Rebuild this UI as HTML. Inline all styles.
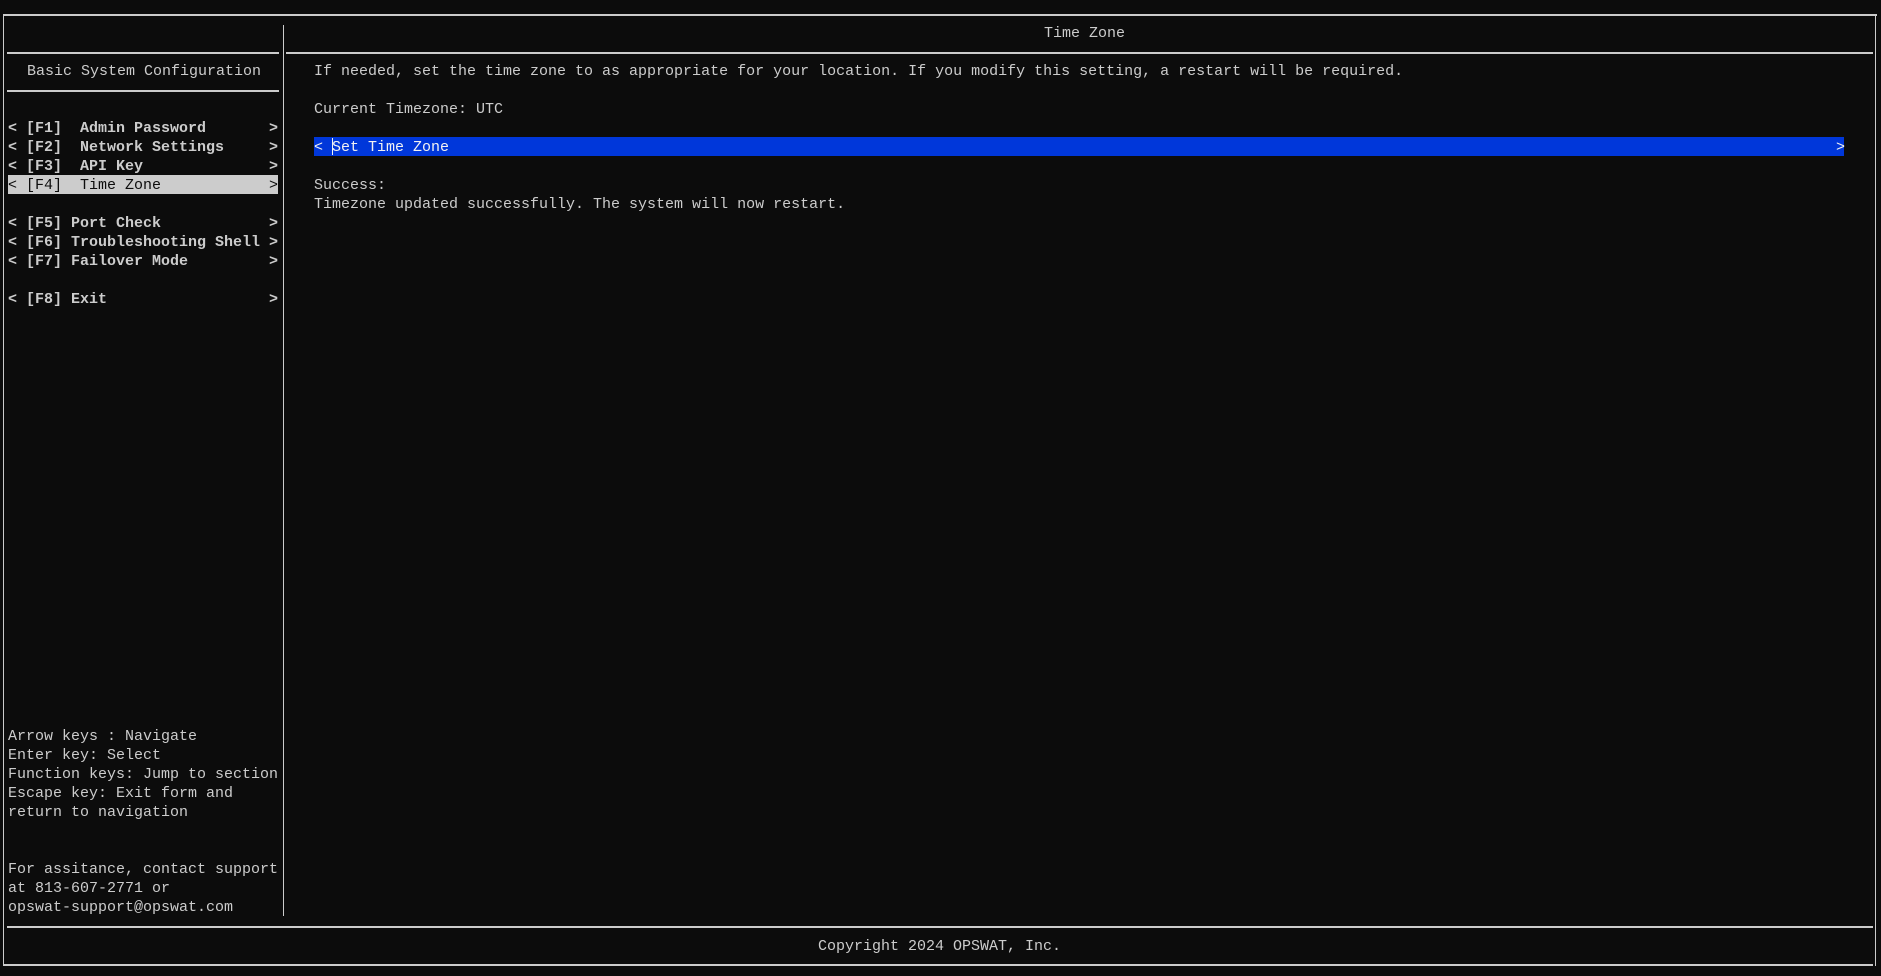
<!DOCTYPE html>
<html><head><meta charset="utf-8"><style>
html,body{margin:0;padding:0;background:#0c0c0c;}
body{width:1881px;height:976px;position:relative;overflow:hidden;font-family:"Liberation Mono",monospace;font-size:15px;color:#cccccc;}
.t{position:absolute;white-space:pre;line-height:19px;height:19px;padding-top:1px;box-sizing:content-box;}
.b{font-weight:bold;}
.h{position:absolute;height:2px;background:#cccccc;}
.v{position:absolute;width:1px;background:#cccccc;}
</style></head><body>
<div class="h" style="left:3px;top:14px;width:1874px;"></div>
<div class="v" style="left:3px;top:14px;height:952px;"></div>
<div class="v" style="left:1875px;top:14px;height:952px;"></div>
<div class="h" style="left:3px;top:964px;width:1870px;"></div>
<div class="h" style="left:7px;top:926px;width:1866px;"></div>
<div class="v" style="left:283px;top:25px;height:891px;"></div>
<div class="h" style="left:7px;top:52px;width:272px;"></div>
<div class="h" style="left:7px;top:90px;width:272px;"></div>
<div class="h" style="left:286px;top:52px;width:1587px;"></div>

<div class="t" style="left:1044px;top:23px;">Time Zone</div>
<div class="t" style="left:27px;top:61px;">Basic System Configuration</div>

<div class="t b" style="left:8px;top:118px;">&lt; [F1]  Admin Password       &gt;</div>
<div class="t b" style="left:8px;top:137px;">&lt; [F2]  Network Settings     &gt;</div>
<div class="t b" style="left:8px;top:156px;">&lt; [F3]  API Key              &gt;</div>
<div class="t" style="left:8px;top:175px;width:270px;height:18px;background:#cccccc;color:#0c0c0c;">&lt; [F4]  Time Zone            &gt;</div>
<div class="t b" style="left:8px;top:213px;">&lt; [F5] Port Check            &gt;</div>
<div class="t b" style="left:8px;top:232px;">&lt; [F6] Troubleshooting Shell &gt;</div>
<div class="t b" style="left:8px;top:251px;">&lt; [F7] Failover Mode         &gt;</div>
<div class="t b" style="left:8px;top:289px;">&lt; [F8] Exit                  &gt;</div>

<div class="t" style="left:8px;top:726px;">Arrow keys : Navigate</div>
<div class="t" style="left:8px;top:745px;">Enter key: Select</div>
<div class="t" style="left:8px;top:764px;">Function keys: Jump to section</div>
<div class="t" style="left:8px;top:783px;">Escape key: Exit form and</div>
<div class="t" style="left:8px;top:802px;">return to navigation</div>
<div class="t" style="left:8px;top:859px;">For assitance, contact support</div>
<div class="t" style="left:8px;top:878px;">at 813-607-2771 or</div>
<div class="t" style="left:8px;top:897px;">opswat-support@opswat.com</div>

<div class="t" style="left:314px;top:61px;">If needed, set the time zone to as appropriate for your location. If you modify this setting, a restart will be required.</div>
<div class="t" style="left:314px;top:99px;">Current Timezone: UTC</div>
<div class="t" style="left:314px;top:137px;width:1530px;height:18px;background:#0037da;color:#f2f2f2;">&lt; Set Time Zone</div>
<div class="t" style="left:1836px;top:137px;color:#f2f2f2;">&gt;</div>
<div style="position:absolute;left:332px;top:138px;width:1px;height:17px;background:#f2f2f2;"></div>
<div class="t" style="left:314px;top:175px;">Success:</div>
<div class="t" style="left:314px;top:194px;">Timezone updated successfully. The system will now restart.</div>

<div class="t" style="left:818px;top:936px;">Copyright 2024 OPSWAT, Inc.</div>
</body></html>
